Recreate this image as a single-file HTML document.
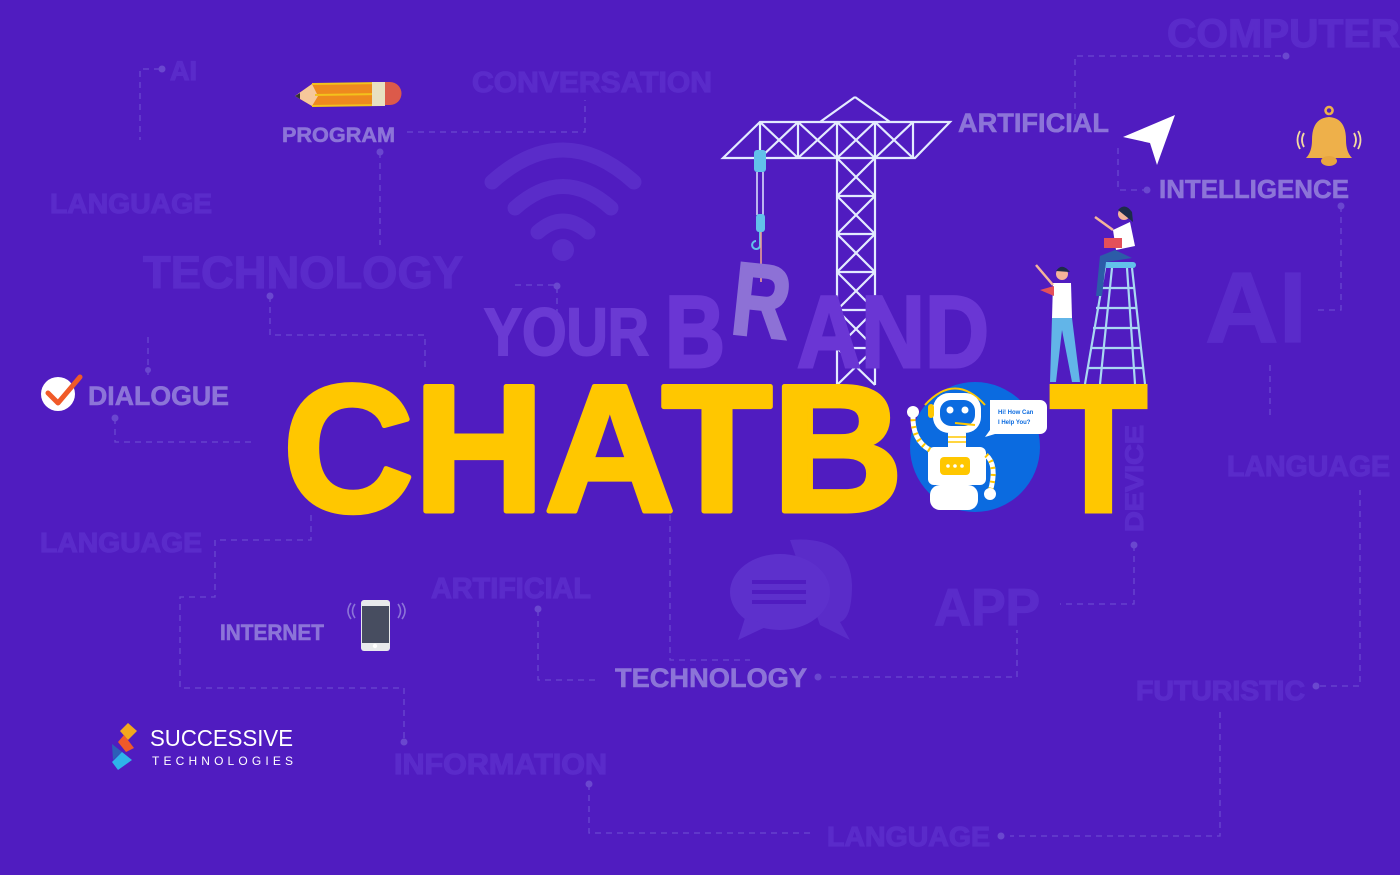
<!DOCTYPE html>
<html><head><meta charset="utf-8"><style>
html,body{margin:0;padding:0;background:#501cc0;}
svg{display:block}
text{font-family:"Liberation Sans",sans-serif;font-weight:bold}
.f{fill:#5a2bca;stroke:#5a2bca;stroke-width:1.2}
.m{fill:#8c74d8;stroke:#8c74d8;stroke-width:0.6}
.d{stroke:#6a47cf;stroke-width:1.3;stroke-dasharray:6 5;fill:none}
.dot{fill:#6a47cf}
</style></head><body>
<svg width="1400" height="875" viewBox="0 0 1400 875" xmlns="http://www.w3.org/2000/svg">
<rect width="1400" height="875" fill="#501cc0"/>
<!-- dashed connectors -->
<path class="d" d="M160 69 H140 V140"/>
<circle class="dot" cx="162" cy="69" r="3.5"/>
<path class="d" d="M407 132 H585 V100"/>
<path class="d" d="M380 152 V245"/><circle class="dot" cx="380" cy="152" r="3.5"/>
<path class="d" d="M270 296 V335 H425 V370"/><circle class="dot" cx="270" cy="296" r="3.5"/>
<path class="d" d="M148 337 V375"/><circle class="dot" cx="148" cy="370" r="3"/>
<path class="d" d="M115 418 V442 H255"/><circle class="dot" cx="115" cy="418" r="3.5"/>
<path class="d" d="M311 515 V540 H215 V597 H180 V688 H404 V740"/><circle class="dot" cx="404" cy="742" r="3.5"/>
<path class="d" d="M538 610 V680 H598"/><circle class="dot" cx="538" cy="609" r="3.5"/>
<path class="d" d="M670 515 V660 H750"/>
<path class="d" d="M830 677 H1017 V630"/><circle class="dot" cx="818" cy="677" r="3.5"/>
<path class="d" d="M515 285 H557 V330"/><circle class="dot" cx="557" cy="286" r="3.5"/>
<path class="d" d="M1075 120 V56 H1282"/><circle class="dot" cx="1286" cy="56" r="3.5"/>
<path class="d" d="M1118 148 V190 H1145"/><circle class="dot" cx="1147" cy="190" r="3.5"/>
<path class="d" d="M1341 206 V310 H1318"/><circle class="dot" cx="1341" cy="206" r="3.5"/>
<path class="d" d="M1134 545 V604 H1060"/><circle class="dot" cx="1134" cy="545" r="3.5"/>
<path class="d" d="M1270 365 V420"/>
<path class="d" d="M1320 686 H1360 V490"/><circle class="dot" cx="1316" cy="686" r="3.5"/>
<path class="d" d="M1220 712 V836 H1010"/><circle class="dot" cx="1001" cy="836" r="3.5"/>
<path class="d" d="M589 784 V833 H810"/><circle class="dot" cx="589" cy="784" r="3.5"/>

<!-- faint words -->
<text class="f" x="170" y="80" font-size="27">AI</text>
<text class="f" x="472" y="92" font-size="29" textLength="240" lengthAdjust="spacingAndGlyphs">CONVERSATION</text>
<text class="f" x="50" y="213" font-size="28" textLength="162" lengthAdjust="spacingAndGlyphs">LANGUAGE</text>
<text class="f" x="143" y="288" font-size="45" textLength="320" lengthAdjust="spacingAndGlyphs">TECHNOLOGY</text>
<text class="f" x="1167" y="47" font-size="40" textLength="233" lengthAdjust="spacingAndGlyphs">COMPUTER</text>
<text class="f" x="1205" y="342" font-size="100" textLength="102" lengthAdjust="spacingAndGlyphs">AI</text>
<text class="f" x="40" y="552" font-size="28" textLength="162" lengthAdjust="spacingAndGlyphs">LANGUAGE</text>
<text class="f" x="1227" y="476" font-size="29" textLength="163" lengthAdjust="spacingAndGlyphs">LANGUAGE</text>
<text class="f" transform="translate(1143 532) rotate(-90)" font-size="25" textLength="107" lengthAdjust="spacingAndGlyphs">DEVICE</text>
<text class="f" x="431" y="598" font-size="29" textLength="160" lengthAdjust="spacingAndGlyphs">ARTIFICIAL</text>
<text class="f" x="934" y="625" font-size="52" textLength="106" lengthAdjust="spacingAndGlyphs">APP</text>
<text class="f" x="1136" y="700" font-size="28" textLength="169" lengthAdjust="spacingAndGlyphs">FUTURISTIC</text>
<text class="f" x="394" y="774" font-size="29" textLength="213" lengthAdjust="spacingAndGlyphs">INFORMATION</text>
<text class="f" x="827" y="846" font-size="28" textLength="163" lengthAdjust="spacingAndGlyphs">LANGUAGE</text>

<!-- wifi -->
<g fill="none" stroke="#5a2cc9" stroke-width="15" stroke-linecap="round">
<path d="M492 182 Q563 118 634 182"/>
<path d="M515 208 Q563 165 611 208"/>
<path d="M538 232 Q563 210 588 232"/>
</g>
<circle cx="563" cy="250" r="11" fill="#5a2cc9"/>
<!-- chat bubbles faint -->
<path d="M790 540 Q850 535 852 585 Q852 618 840 622 L850 640 L820 625 Z" fill="#5a2cc9"/>
<ellipse cx="780" cy="592" rx="50" ry="38" fill="#5d30cc"/>
<path d="M745 618 L738 640 L770 625 Z" fill="#5d30cc"/>
<g stroke="#501cc0" stroke-width="4"><line x1="752" y1="582" x2="806" y2="582"/><line x1="752" y1="592" x2="806" y2="592"/><line x1="752" y1="602" x2="806" y2="602"/></g>

<!-- medium words -->
<text class="m" x="282" y="142" font-size="21" textLength="113" lengthAdjust="spacingAndGlyphs">PROGRAM</text>
<text class="m" x="958" y="132" font-size="27" textLength="151" lengthAdjust="spacingAndGlyphs">ARTIFICIAL</text>
<text class="m" x="1159" y="198" font-size="26" textLength="190" lengthAdjust="spacingAndGlyphs">INTELLIGENCE</text>
<text class="m" x="88" y="405" font-size="27" textLength="141" lengthAdjust="spacingAndGlyphs">DIALOGUE</text>
<text class="m" x="220" y="640" font-size="22" textLength="104" lengthAdjust="spacingAndGlyphs">INTERNET</text>
<text class="m" x="615" y="687" font-size="27" textLength="192" lengthAdjust="spacingAndGlyphs">TECHNOLOGY</text>

<!-- pencil -->
<path d="M312 84 L385 82 L385 105 L312 106 L295 96 Z" fill="#ee8a1e"/>
<path d="M312 84 L295 96 L312 106 L318 96 Z" fill="#f6c89a"/>
<path d="M312 84 L385 83 M315 95 L385 94 M312 106 L385 105" stroke="#f3c21c" stroke-width="2"/>
<rect x="372" y="82" width="13" height="24" fill="#e8e0c0"/>
<path d="M385 82 H390 A11.5 11.5 0 0 1 390 105 H385 Z" fill="#dc5a4a"/>
<path d="M295 96 L300 93 L300 99 Z" fill="#333"/>

<!-- check icon -->
<circle cx="58" cy="394" r="17" fill="#fff"/>
<path d="M48 393 L58 403 L80 377" stroke="#f05a28" stroke-width="5" fill="none" stroke-linecap="round" stroke-linejoin="round"/>

<!-- phone -->
<rect x="361" y="600" width="29" height="51" rx="3" fill="#e8eaec"/>
<rect x="362" y="606" width="27" height="37" fill="#474d60"/>
<circle cx="375" cy="646" r="2.2" fill="#fff"/>
<path d="M355 604 Q350 611 355 618 M398 604 Q403 611 398 618" stroke="#8c74d8" stroke-width="1.6" fill="none"/>
<path d="M351 603 Q345 611 351 619 M402 603 Q408 611 402 619" stroke="#8c74d8" stroke-width="1.6" fill="none"/>

<!-- logo -->
<path d="M128 723 L137 731 L128 740 L120 731 Z" fill="#f2a81d"/>
<path d="M124 735 L134 748 L126 752 L118 742 Z" fill="#ef5a2a"/>
<path d="M112 744 L122 752 L113 760 Z" fill="#2c5fb8"/>
<path d="M122 752 L132 760 L118 770 L112 762 Z" fill="#2eb3ea"/>
<text x="150" y="746" font-size="23" fill="#fff" style="font-weight:normal" textLength="143" lengthAdjust="spacingAndGlyphs">SUCCESSIVE</text>
<text x="152" y="765" font-size="12" fill="#fff" style="font-weight:normal" textLength="141" lengthAdjust="spacing">TECHNOLOGIES</text>

<!-- send arrow -->
<path d="M1175 115 L1123 137 L1150 143 L1157 165 Z" fill="#fff"/>
<!-- bell -->
<path d="M1329 114 a3.5 3.5 0 1 1 0.1 0" stroke="#eeb04a" stroke-width="2.5" fill="none"/>
<path d="M1329 117 Q1312 118 1312 140 Q1312 152 1306 158 H1352 Q1346 152 1346 140 Q1346 118 1329 117 Z" fill="#eeb04a"/>
<ellipse cx="1329" cy="161" rx="8" ry="5" fill="#e8a53f"/>
<path d="M1304 133 Q1300 140 1304 147 M1354 133 Q1358 140 1354 147 M1300 131 Q1295 140 1300 149 M1358 131 Q1363 140 1358 149" stroke="#f3d9a0" stroke-width="1.8" fill="none"/>

<!-- crane -->
<g stroke="#e3ebff" stroke-width="2.2" fill="none">
<path d="M855 97 L820 122 M855 97 L890 122 M723 158 L760 122 H950 L915 158 Z"/>
<path d="M760 122 V158 M798 122 V158 M837 122 V158 M875 122 V158 M913 122 V158"/>
<path d="M760 122 L798 158 M798 122 L760 158 M798 122 L837 158 M837 122 L798 158 M837 122 L875 158 M875 122 L837 158 M875 122 L913 158 M913 122 L875 158"/>
<path d="M837 158 V385 M875 158 V385"/>
<path d="M837 196 H875 M837 234 H875 M837 272 H875 M837 310 H875 M837 348 H875"/>
<path d="M837 158 L875 196 M875 158 L837 196 M837 196 L875 234 M875 196 L837 234 M837 234 L875 272 M875 234 L837 272 M837 272 L875 310 M875 272 L837 310 M837 310 L875 348 M875 310 L837 348 M837 348 L875 385 M875 348 L837 385"/>
</g>
<rect x="754" y="150" width="12" height="22" rx="3" fill="#62c1ea"/>
<line x1="757" y1="172" x2="757" y2="215" stroke="#dfe6ff" stroke-width="1.5"/>
<line x1="763" y1="172" x2="763" y2="215" stroke="#dfe6ff" stroke-width="1.5"/>
<rect x="756" y="214" width="9" height="18" rx="3" fill="#62c1ea"/>
<path d="M760 232 V244 a4 4 0 1 1 -4 -3" stroke="#62c1ea" stroke-width="2" fill="none"/>
<line x1="761" y1="232" x2="761" y2="282" stroke="#f3a88f" stroke-width="1.5"/>

<!-- YOUR BRAND -->
<text x="484" y="355" font-size="67" fill="#6a3ad3" stroke="#6a3ad3" stroke-width="2" textLength="165" lengthAdjust="spacingAndGlyphs">YOUR</text>
<text x="665" y="367" font-size="102" fill="#6a36d4" stroke="#6a36d4" stroke-width="3" textLength="60" lengthAdjust="spacingAndGlyphs">B</text>
<text x="797" y="367" font-size="102" fill="#6a36d4" stroke="#6a36d4" stroke-width="3" textLength="192" lengthAdjust="spacingAndGlyphs">AND</text>
<text transform="translate(729 333) rotate(6)" font-size="103" fill="#8d71d6" stroke="#8d71d6" stroke-width="3" textLength="58" lengthAdjust="spacingAndGlyphs">R</text>

<!-- CHATBOT -->
<text x="283" y="511" font-size="181" fill="#ffc700" stroke="#ffc700" stroke-width="5" stroke-linejoin="round" textLength="620" lengthAdjust="spacingAndGlyphs">CHATB</text>
<circle cx="975" cy="447" r="65" fill="#0b6be0"/>
<text x="1050" y="511" font-size="181" fill="#ffc700" stroke="#ffc700" stroke-width="5" textLength="97" lengthAdjust="spacingAndGlyphs">T</text>

<!-- robot -->
<path d="M925 405 Q955 372 985 405" stroke="#ffc700" stroke-width="2" fill="none"/>
<rect x="933" y="393" width="48" height="40" rx="16" fill="#fff"/>
<rect x="940" y="400" width="35" height="26" rx="11" fill="#0b6be0"/>
<circle cx="950" cy="410" r="3.5" fill="#fff"/><circle cx="965" cy="410" r="3.5" fill="#fff"/>
<rect x="928" y="404" width="6" height="14" rx="3" fill="#ffc700"/>
<path d="M955 423 L975 425" stroke="#ffc700" stroke-width="2"/>
<rect x="948" y="433" width="18" height="14" fill="#fff"/>
<path d="M948 437 H966 M948 442 H966" stroke="#ffc700" stroke-width="1.5"/>
<rect x="928" y="447" width="58" height="38" rx="6" fill="#fff"/>
<rect x="930" y="485" width="48" height="25" rx="10" fill="#fff"/>
<rect x="940" y="457" width="30" height="18" rx="4" fill="#ffc700"/>
<circle cx="948" cy="466" r="1.8" fill="#fff"/><circle cx="955" cy="466" r="1.8" fill="#fff"/><circle cx="962" cy="466" r="1.8" fill="#fff"/>
<path d="M930 450 Q912 440 913 415" stroke="#fff" stroke-width="5" fill="none"/>
<path d="M930 450 Q912 440 913 415" stroke="#ffc700" stroke-width="5" stroke-dasharray="2 5" fill="none"/>
<circle cx="913" cy="412" r="6" fill="#fff"/>
<path d="M986 455 Q998 465 990 492" stroke="#fff" stroke-width="5" fill="none"/>
<path d="M986 455 Q998 465 990 492" stroke="#ffc700" stroke-width="5" stroke-dasharray="2 5" fill="none"/>
<circle cx="990" cy="494" r="6" fill="#fff"/>
<path d="M990 400 H1040 a7 7 0 0 1 7 7 V427 a7 7 0 0 1 -7 7 H995 L985 437 L990 430 Z" fill="#fff"/>
<text x="998" y="414" font-size="6" fill="#0b6be0">Hi! How Can</text>
<text x="998" y="424" font-size="6" fill="#0b6be0">I Help You?</text>

<!-- ladder -->
<g stroke="#a9d8f2" stroke-width="2.2" fill="none">
<path d="M1105 268 L1085 384 M1132 268 L1145 384 M1112 268 L1100 384 M1127 268 L1135 384"/>
<path d="M1100 288 H1134 M1096 308 H1137 M1093 328 H1139 M1091 348 H1141 M1088 368 H1143"/>
</g>
<rect x="1100" y="262" width="36" height="6" rx="3" fill="#62c1ea"/>
<!-- woman -->
<path d="M1113 230 L1130 222 L1135 246 L1116 250 Z" fill="#fff"/>
<circle cx="1124" cy="214" r="6" fill="#f4b49a"/>
<path d="M1118 210 Q1125 202 1132 212 L1133 222 Z" fill="#1d2c4a"/>
<rect x="1104" y="238" width="18" height="10" fill="#e4505a"/>
<path d="M1115 250 L1100 256 L1096 296 L1102 296 L1106 262 L1132 258 Z" fill="#2c5ca8"/>
<path d="M1113 230 L1095 217" stroke="#f4b49a" stroke-width="2.5"/>
<!-- man -->
<path d="M1053 283 L1071 283 L1072 318 L1052 318 Z" fill="#fff"/>
<circle cx="1062" cy="274" r="6" fill="#f4b49a"/>
<path d="M1056 271 Q1062 262 1070 272 Z" fill="#1d2c4a"/>
<path d="M1052 318 L1050 382 H1056 L1062 330 L1072 382 H1080 L1072 318 Z" fill="#62b5e8"/>
<path d="M1053 285 L1036 265" stroke="#f4b49a" stroke-width="2.5"/>
<path d="M1040 290 L1054 286 L1054 296 Z" fill="#e4505a"/>
</svg>
</body></html>
